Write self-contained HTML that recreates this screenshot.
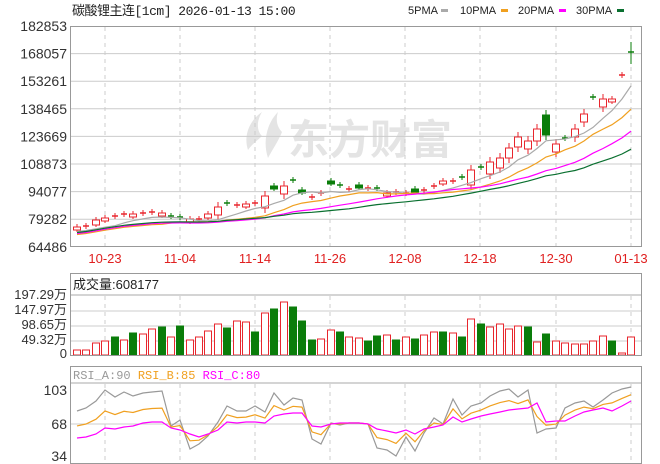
<!DOCTYPE html>
<html><head><meta charset="utf-8"><style>
html,body{margin:0;padding:0;background:#fff;}
body{width:660px;height:464px;overflow:hidden;position:relative;font-family:"Liberation Sans","Noto Sans CJK SC",sans-serif;}
svg{position:absolute;left:0;top:0;}
</style></head><body>
<svg id="s" width="660" height="464" xmlns="http://www.w3.org/2000/svg" font-family="Liberation Sans, Noto Sans CJK SC, sans-serif">
<g fill="#e4e4e4">
<path d="M262 112 C250 120 243 135 248 150 C252 144 258 140 262 136 C256 130 257 120 262 112Z"/>
<path d="M278 112 C268 122 262 140 268 158 C272 150 278 142 282 132 C276 126 276 118 278 112Z"/>
<text x="288" y="154" font-size="41" font-weight="bold" font-family="Noto Sans CJK SC, sans-serif">东方财富</text>
</g>
<g id="g"></g>
<text x="72" y="15" font-size="13" fill="#222" font-family="Liberation Mono, Noto Sans CJK SC, monospace" letter-spacing="-0.5">碳酸锂主连[1cm] 2026-01-13 15:00</text>
<g font-size="11" fill="#222" font-family="Liberation Sans Narrow, Liberation Sans, sans-serif">
<text x="408" y="14">5PMA</text><rect x="441" y="9" width="7" height="3" fill="#aaa"/>
<text x="460" y="14">10PMA</text><rect x="501" y="9" width="7" height="3" fill="#f0a020"/>
<text x="518" y="14">20PMA</text><rect x="559" y="9" width="7" height="3" fill="#f0f"/>
<text x="576" y="14">30PMA</text><rect x="617" y="9" width="7" height="3" fill="#0a7030"/>
</g>
</svg>
<script>
var g=document.getElementById('g');var h='';
function L(x1,y1,x2,y2,c,d,w){h+='<line x1="'+x1+'" y1="'+y1+'" x2="'+x2+'" y2="'+y2+'" stroke="'+c+'" stroke-width="'+(w||1)+'"'+(d?' stroke-dasharray="4,4"':'')+'/>';}
function T(x,y,t,c,s,a){h+='<text x="'+x+'" y="'+y+'" fill="'+c+'" font-size="'+s+'" text-anchor="'+(a||'end')+'">'+t+'</text>';}
var lv=['182853','168057','153261','138465','123669','108873','94077','79282','64486'];
for(var i=0;i<9;i++){var y=26+i*27.6;if(i>0&&i<8)L(70,y,641,y,'#ccc');T(67,y+5,lv[i],'#333',14);}
var vx=[105,180,255,330,405,480,556,631],dl=['10-23','11-04','11-14','11-26','12-08','12-18','12-30','01-13'];
for(var i=0;i<8;i++){L(vx[i],27,vx[i],246,'#ccc',1);L(vx[i],296,vx[i],354,'#ccc',1);L(vx[i],384,vx[i],463,'#ccc',1);T(vx[i],263,dl[i],'#e02020',13,'middle');}
[311,326,341].forEach(function(y){L(70,y,641,y,'#ccc');});
L(70,295,641,295,'#aaa');
T(67,299,'197.29万','#333',13);T(67,314,'147.97万','#333',13);T(67,329,'98.65万','#333',13);T(67,344,'49.32万','#333',13);T(67,358,'0','#333',13);
h+='<text x="73" y="289" font-size="13" fill="#222">成交量:608177</text>';
L(70,383,641,383,'#aaa');L(70,424,641,424,'#ccc');
T(67,395,'103','#333',14);T(67,429,'68','#333',14);T(67,461,'34','#333',14);
h+='<text x="73" y="379" font-size="12" font-family="Liberation Mono,monospace"><tspan fill="#999">RSI_A:90 </tspan><tspan fill="#f0a020">RSI_B:85 </tspan><tspan fill="#f0f">RSI_C:80</tspan></text>';
var cx=[],N=60;for(var i=0;i<N;i++)cx.push(Math.round(77+i*(631-77)/(N-1)));
var cl=[227,226,220,218,216,214,214,213,212,213,217,218,219,219,214,207,204,205,204,203,196,189,186,181,193,197,193,
184,186,189,188,188,189,193,192,193,192,190,186,181,181,178,170,168,162,158,148,137,141,129,135,144,139,129,114,98,99,99,75,53];
var gset=[10,11,16,21,23,24,27,28,30,32,36,41,43,50,52,55,59];
var big={2:5,14:4,15:8,20:12,22:8,42:15,44:12,45:10,46:10,47:10,48:8,49:12,50:20,51:8,53:8,54:8,56:8,39:3,41:1};
var cc=[];
for(var i=0;i<N;i++){var x=cx[i],gr=gset.indexOf(i)>=0,c=gr?'#0a7d0a':'#e8262d',b=big[i]||(i%3==0?3:1),t=cl[i],bt=cl[i]+b;
 if(gr){t=cl[i]-b;bt=cl[i];}
 var hi=t-(b>6?5:3),lo=bt+(b>6?5:2);
 if(i==N-1){hi=42;lo=64;t=52;bt=54;}
 L(x,hi,x,lo,c);
 if(b<=1)L(x-3,t,x+3,t,c,0,1.5);else h+='<rect x="'+(x-3.5)+'" y="'+t+'" width="7" height="'+(bt-t)+'" fill="'+(gr?c:'#fff')+'" stroke="'+c+'"/>';
 cc.push((t+bt)/2);}
function ma(n,c,oL,oR){var p='';for(var i=0;i<N;i++){var s=0,k=0;for(var j=Math.max(0,i-n+1);j<=i;j++){s+=cc[j];k++;}var v=s/k;var f=Math.pow(i/59,2);p+=(i?'L':'M')+cx[i]+','+(v+oL+(oR-oL)*f).toFixed(1);}h+='<path d="'+p+'" fill="none" stroke="'+c+'" stroke-width="1.2"/>';}
ma(5,'#aaa',3,0);ma(10,'#f0a020',6,0);ma(20,'#f0f',5,-4);ma(30,'#0a7030',4,-4);
var vt=[350,350,343,341,337,340,333,334,329,327,337,326,340,337,331,324,328,321,322,332,313,309,302,307,321,340,339,330,332,337,338,341,336,335,340,337,339,335,332,332,333,337,319,324,327,324,329,326,327,342,334,341,343,344,344,341,336,341,353,337];
var vc='rrrrgrgrrgrgrrrrgrrgrgrgggrrgrrggrgrgrrgrgrgrrrrgrgrrrrrrgrr';
for(var i=0;i<N;i++){var r=vc[i]=='r';if(i==N-2){r=true}var c=r?'#e8262d':'#0a7d0a';
 h+='<rect x="'+(cx[i]-3.5)+'" y="'+vt[i]+'" width="7" height="'+(355-vt[i])+'" fill="'+(r?'#fff':c)+'" stroke="'+c+'"/>';}
var ra=[411,408,401,390,397,392,396,393,392,391,426,420,449,444,436,422,406,411,411,406,412,393,405,398,400,439,444,423,425,423,423,424,448,450,456,437,451,433,418,424,399,415,406,403,396,391,389,397,390,433,429,428,408,403,401,407,400,393,389,387];
var rc=[438,437,434,428,429,427,426,423,422,422,428,430,434,437,434,430,422,423,422,422,423,416,414,413,413,426,427,424,423,423,423,424,429,431,433,430,434,429,427,425,417,422,419,416,414,412,410,409,408,403,422,421,421,416,412,410,408,411,406,401];
function pl(a,c){var p='';for(var i=0;i<N;i++)p+=(i?'L':'M')+cx[i]+','+a[i];h+='<path d="'+p+'" fill="none" stroke="'+c+'" stroke-width="1.2"/>';}
var rb=ra.map(function(v,i){return (v*0.45+rc[i]*0.55).toFixed(1);});
pl(ra,'#999');pl(rb,'#f0a020');pl(rc,'#f0f');
h+='<rect x="70.5" y="26.5" width="571" height="220" fill="none" stroke="#999"/>';
h+='<rect x="70.5" y="273.5" width="571" height="82" fill="none" stroke="#999"/>';
h+='<rect x="70.5" y="366.5" width="571" height="97" fill="none" stroke="#999"/>';
g.innerHTML=h;
</script>
</body></html>
